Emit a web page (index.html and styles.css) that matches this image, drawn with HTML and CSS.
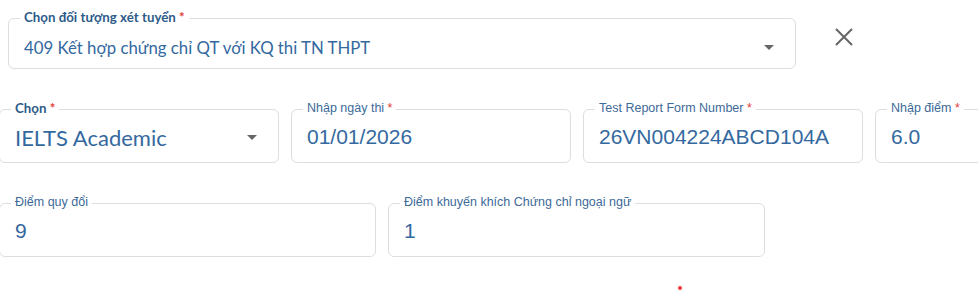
FILE: index.html
```html
<!DOCTYPE html>
<html lang="vi">
  <head>
    <meta charset="UTF-8" />
    <meta name="viewport" content="width=device-width, initial-scale=1.0" />
    <title>Chứng chỉ ngoại ngữ</title>
    <link rel="stylesheet" href="styles.css">
  </head>
  <body>
    <div class="form">
      <div class="row-top">
        <div class="field field-main">
          <label class="field-label strong">Chọn đối tượng xét tuyển <span class="req">*</span></label>
          <span class="value value-round">409 Kết hợp chứng chỉ QT với KQ thi TN THPT</span>
          <span class="caret"></span>
        </div>
        <button class="close" aria-label="Đóng">
          <svg width="18" height="18" viewBox="0 0 18 18">
            <path d="M1 1L17 17M17 1L1 17" stroke="#666" stroke-width="2" fill="none" />
          </svg>
        </button>
      </div>

      <div class="scroll">
        <div class="grid grid-4">
          <div class="field">
            <label class="field-label strong">Chọn <span class="req">*</span></label>
            <span class="value value-round">IELTS Academic</span>
            <span class="caret"></span>
          </div>
          <div class="field">
            <label class="field-label">Nhập ngày thi <span class="req">*</span></label>
            <span class="value">01/01/2026</span>
          </div>
          <div class="field">
            <label class="field-label">Test Report Form Number <span class="req">*</span></label>
            <span class="value">26VN004224ABCD104A</span>
          </div>
          <div class="field">
            <label class="field-label">Nhập điểm <span class="req">*</span></label>
            <span class="value">6.0</span>
          </div>
        </div>

        <div class="grid grid-3">
          <div class="field">
            <label class="field-label">Điểm quy đổi</label>
            <span class="value">9</span>
          </div>
          <div class="field">
            <label class="field-label">Điểm khuyến khích Chứng chỉ ngoại ngữ</label>
            <span class="value">1</span>
          </div>
        </div>
      </div>

      <span class="dot"></span>
    </div>
  </body>
</html>
```

FILE: styles.css
```css
* {
  margin: 0;
  padding: 0;
  box-sizing: border-box;
}

body {
  font-family: "Liberation Sans", Arial, sans-serif;
  background-color: #fff;
  overflow: hidden;
}

.form {
  padding-top: 18px;
}

.row-top {
  display: flex;
  align-items: flex-start;
  padding-left: 8px;
}

.field {
  position: relative;
  display: flex;
  align-items: center;
  flex-shrink: 0;
  height: 54px;
  padding: 2px 15px 0 15px;
  border: 1px solid #dedede;
  border-radius: 6px;
  background-color: #fff;
}

.field-main {
  width: 788px;
  height: 51px;
  padding-top: 7px;
}

.field-label {
  position: absolute;
  top: -10px;
  left: 11px;
  padding: 0 4px;
  background-color: #fff;
  font-size: 12.5px;
  line-height: 16px;
  color: #3d6a99;
  white-space: nowrap;
}

.field-label.strong {
  font-family: Lato, sans-serif;
  font-weight: 700;
  font-size: 13.3px;
  color: #2e5b8a;
}

.req {
  color: #e53935;
}

.value {
  flex: 1;
  font-size: 21px;
  color: #3469a0;
  white-space: nowrap;
}

.value-round {
  font-family: Lato, sans-serif;
  font-size: 22px;
}

.field-main .value {
  font-size: 16.8px;
}

.caret {
  width: 0;
  height: 0;
  margin-right: 6px;
  border-left: 5px solid transparent;
  border-right: 5px solid transparent;
  border-top: 5px solid #666;
}

.close {
  margin: 10px 0 0 39px;
  border: none;
  background: none;
  line-height: 0;
  cursor: pointer;
}

.scroll {
  overflow: hidden;
  margin-top: 30px;
  margin-left: -1px;
  padding-top: 10px;
}

.grid {
  display: flex;
  gap: 12px;
}

.grid-4 .field {
  width: 280px;
}

.grid-3 {
  margin-top: 40px;
}

.grid-3 .field {
  width: 377px;
}

.dot {
  display: block;
  width: 4px;
  height: 4px;
  margin: 29px 0 0 678px;
  border-radius: 50%;
  background-color: #e53935;
}
```
